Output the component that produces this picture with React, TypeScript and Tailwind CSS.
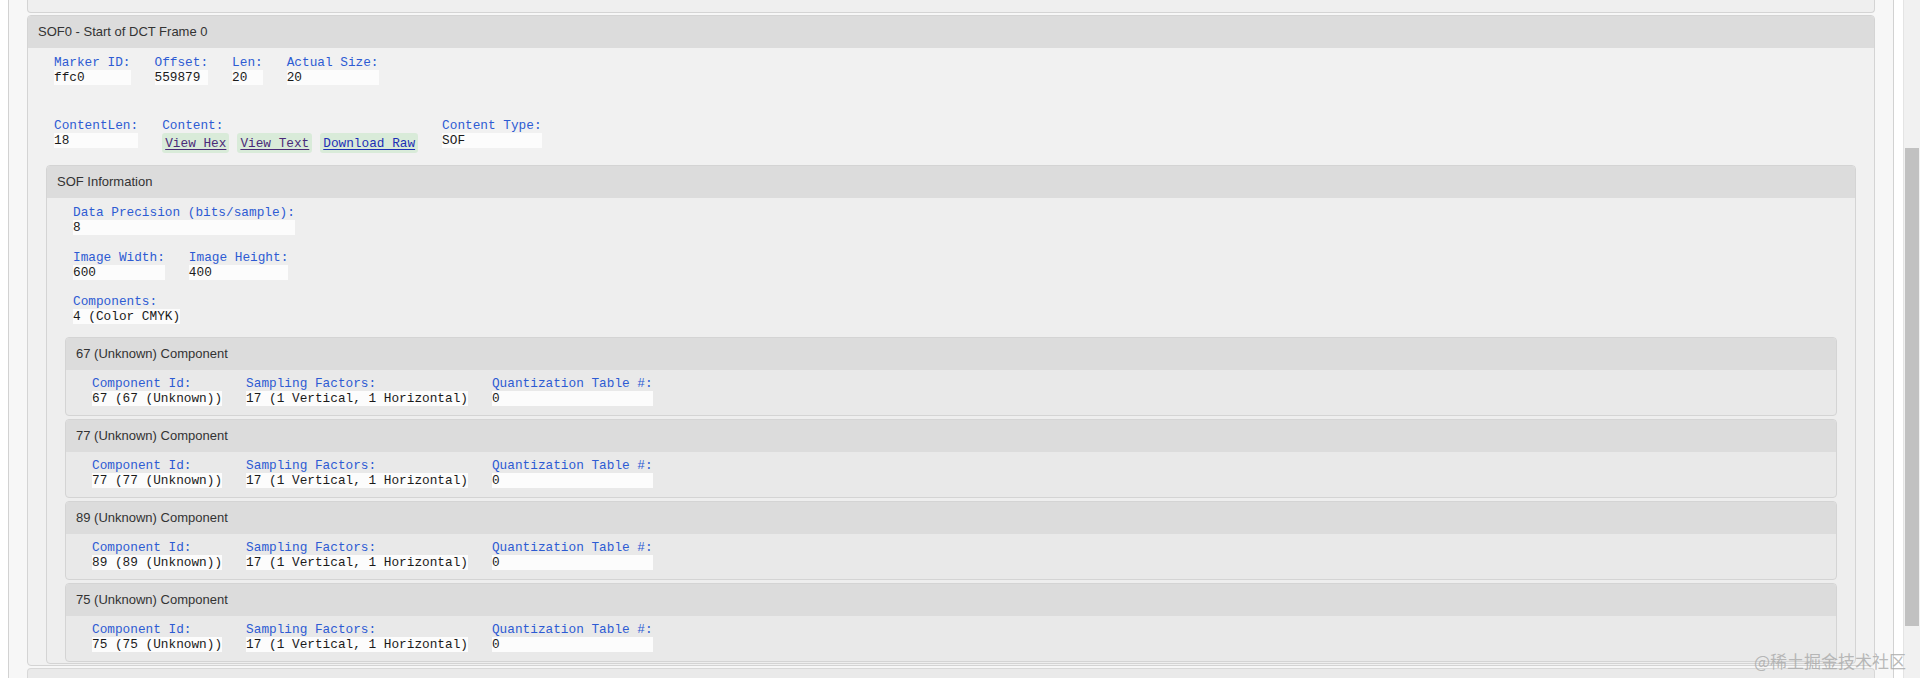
import type { ReactNode } from "react";

type FieldProps = {
  label: string;
  value?: string;
  children?: ReactNode;
};

function Field({ label, value, children }: FieldProps) {
  return (
    <div className="flex flex-col">
      <span className="h-[15px] whitespace-pre leading-[15px] text-[#2d5bd3]">{label}</span>
      {children ?? (
        <span className="h-[15px] whitespace-pre bg-[#fcfcfc] leading-[15px] text-[#1a1a1a]">{value}</span>
      )}
    </div>
  );
}

function LinkButton({ text, visited }: { text: string; visited?: boolean }) {
  return (
    <span
      className={`flex h-[20px] items-center rounded-[3px] bg-[#d9ebd9] px-[3px] leading-[15px] whitespace-pre underline underline-offset-2 ${
        visited ? "text-[#4a2a78]" : "text-[#1c2fb5]"
      }`}
    >
      {text}
    </span>
  );
}

type PanelProps = {
  title: string;
  body: string;
  children: ReactNode;
};

function Panel({ title, body, children }: PanelProps) {
  return (
    <section className={`overflow-hidden rounded-[4px] border border-[#d4d4d4] ${body}`}>
      <header className="flex h-[32px] items-center bg-[#dcdcdc] pl-[10px] font-['Liberation_Sans',Arial,sans-serif] text-[13px] text-[#333]">
        {title}
      </header>
      {children}
    </section>
  );
}

const components = [
  { id: "67", value: "67 (67 (Unknown))" },
  { id: "77", value: "77 (77 (Unknown))" },
  { id: "89", value: "89 (89 (Unknown))" },
  { id: "75", value: "75 (75 (Unknown))" },
];

export default function App() {
  return (
    <div className="flex h-[678px] w-[1920px] overflow-hidden bg-white font-['Liberation_Mono','Courier_New',monospace] text-[12.75px]">
      <div className="flex-1 pl-[8px] pr-[9px]">
        <div className="flex h-full flex-col gap-[2px] border-x border-[#d2d2d2] bg-[#f7f7f7] px-[18px]">
          <div className="h-[13px] shrink-0 rounded-b-[4px] border border-t-0 border-[#d4d4d4] bg-[#efefef]" />

          <Panel title="SOF0 - Start of DCT Frame 0" body="bg-[#f1f1f1] shrink-0">
            <div className="px-[18px] pt-[7px] pb-[1px]">
              <div className="flex gap-[24px] pl-[8px]">
                <Field label="Marker ID:" value="ffc0" />
                <Field label="Offset:" value="559879" />
                <Field label="Len:" value="20" />
                <Field label="Actual Size:" value="20" />
              </div>
              <div className="mt-[33px] flex gap-[24px] pl-[8px]">
                <Field label="ContentLen:" value="18" />
                <Field label="Content:">
                  <div className="flex gap-[8px]">
                    <LinkButton text="View Hex" visited />
                    <LinkButton text="View Text" visited />
                    <LinkButton text="Download Raw" />
                  </div>
                </Field>
                <Field label="Content Type:" value="SOF" />
              </div>

              <div className="mt-[12px]">
                <Panel title="SOF Information" body="bg-[#eeeeee]">
                  <div className="px-[18px] pt-[7px] pb-[1px]">
                    <div className="flex pl-[8px]">
                      <Field label="Data Precision (bits/sample):" value="8" />
                    </div>
                    <div className="mt-[15px] flex gap-[24px] pl-[8px]">
                      <Field label="Image Width:" value="600" />
                      <Field label="Image Height:" value="400" />
                    </div>
                    <div className="mt-[14px] flex pl-[8px]">
                      <Field label="Components:" value="4 (Color CMYK)" />
                    </div>
                    <div className="mt-[13px] flex flex-col gap-[3px]">
                      {components.map((c) => (
                        <Panel key={c.id} title={`${c.id} (Unknown) Component`} body="bg-[#e9e9e9]">
                          <div className="flex gap-[24px] pt-[6px] pb-[9px] pl-[26px]">
                            <Field label="Component Id:" value={c.value} />
                            <Field label="Sampling Factors:" value="17 (1 Vertical, 1 Horizontal)" />
                            <Field label="Quantization Table #:" value="0" />
                          </div>
                        </Panel>
                      ))}
                    </div>
                  </div>
                </Panel>
              </div>
            </div>
          </Panel>

          <div className="h-[20px] shrink-0 rounded-t-[4px] border border-b-0 border-[#d8d8d8] bg-[#eaeaea]" />
        </div>
      </div>

      <div className="relative w-[17px] border-l border-[#e4e4e4] bg-[#f1f1f1] px-[1px]">
        <div className="mt-[148px] h-[478px] w-full bg-[#c1c1c1]" />
      </div>

      <span className="pointer-events-none absolute left-[1754px] top-[651px] font-['Noto_Sans_CJK_SC',sans-serif] text-[17px] leading-[20px] text-[#a8a8a8]/80">
        @稀土掘金技术社区
      </span>
    </div>
  );
}
